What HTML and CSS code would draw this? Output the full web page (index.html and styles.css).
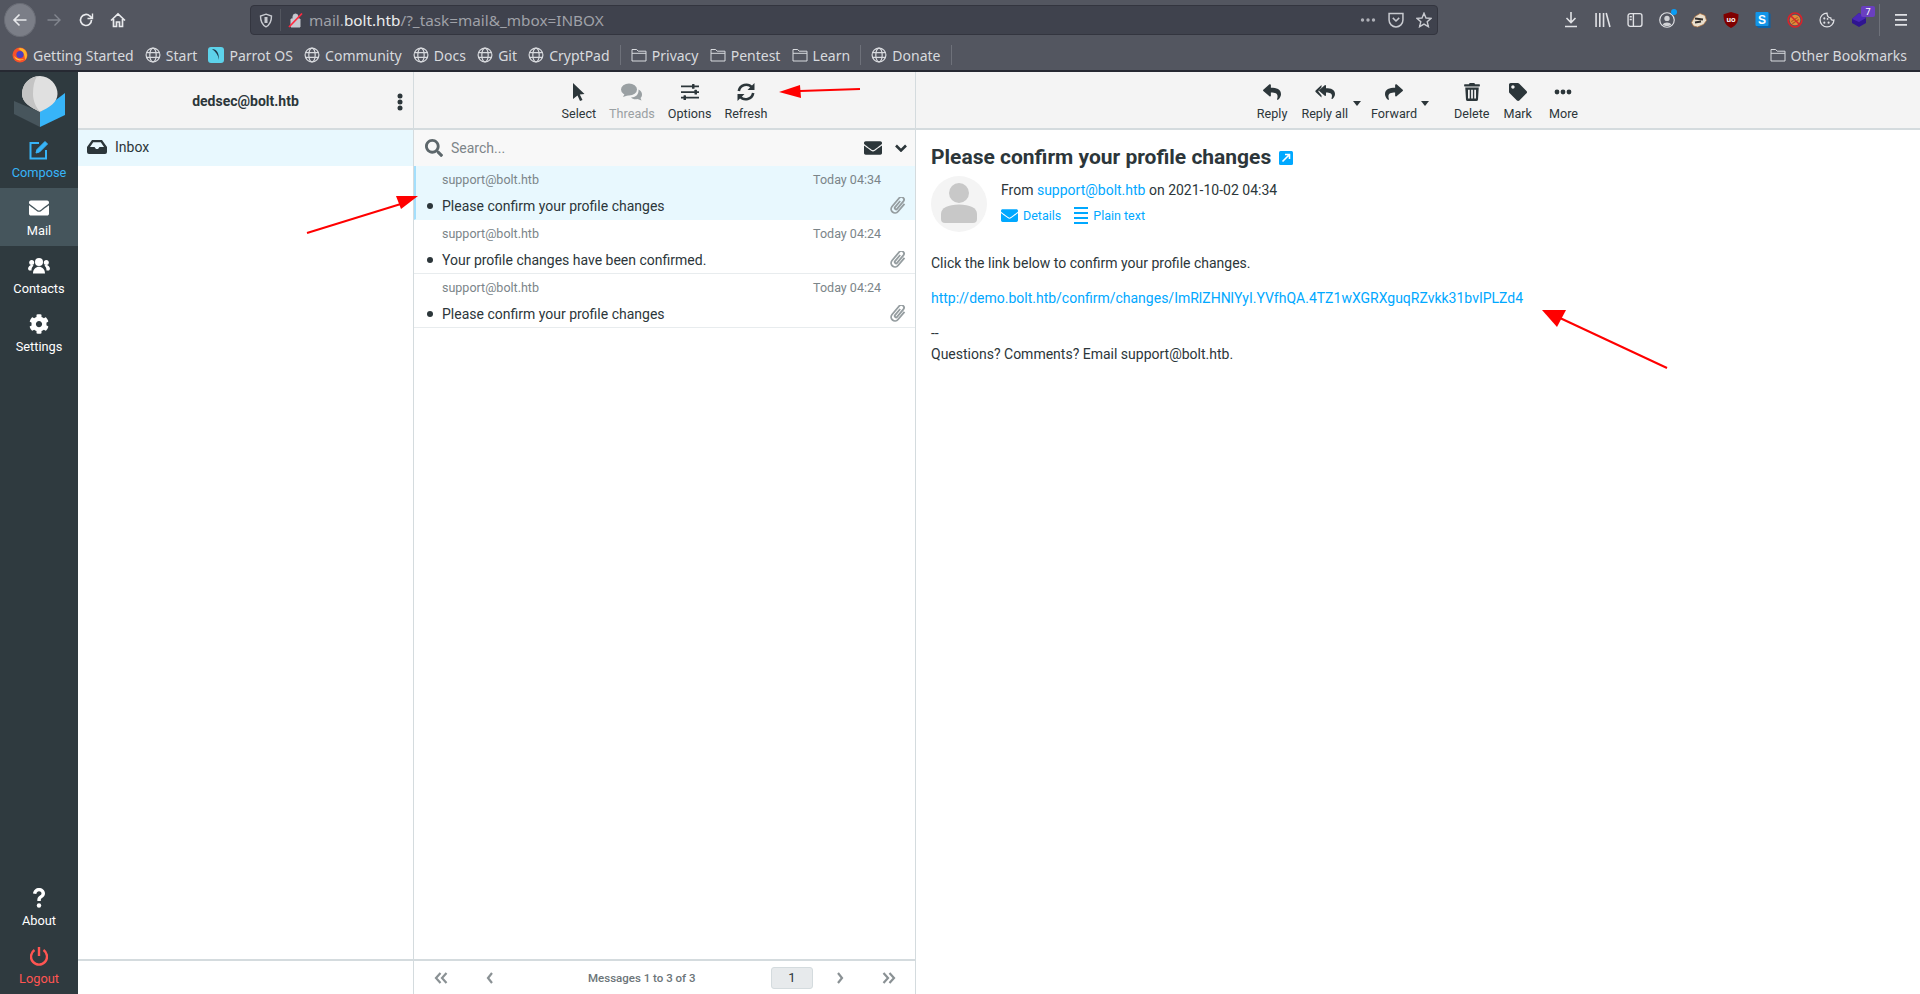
FILE: index.html
```html
<!DOCTYPE html>
<html lang="en">
<head>
    <meta charset="UTF-8">
    <title>Roundcube Webmail :: Please confirm your profile changes</title>
    <link rel="stylesheet" href="styles.css">
</head>
<body>
    <svg class="defs" width="0" height="0">
        <symbol id="i-envelope" viewBox="0 0 512 512"><path d="M502.3 190.8c3.9-3.1 9.7-.2 9.7 4.7V400c0 26.5-21.5 48-48 48H48c-26.5 0-48-21.5-48-48V195.6c0-5 5.7-7.8 9.7-4.7 22.4 17.4 52.1 39.5 154.1 113.6 21.1 15.4 56.7 47.8 92.2 47.6 35.7.3 72-32.8 92.3-47.6 102-74.1 131.6-96.3 154-113.7zM256 320c23.2.4 56.6-29.2 73.4-41.4 132.7-96.3 142.8-104.7 173.4-128.7 5.8-4.5 9.2-11.5 9.2-18.9v-19c0-26.5-21.5-48-48-48H48C21.5 64 0 85.5 0 112v19c0 7.4 3.4 14.3 9.2 18.9 30.6 23.9 40.7 32.4 173.4 128.7 16.8 12.2 50.2 41.8 73.4 41.4z"/></symbol>
        <symbol id="i-search" viewBox="0 0 512 512"><path d="M505 442.7L405.3 343c-4.5-4.5-10.6-7-17-7H372c27.6-35.3 44-79.7 44-128C416 93.1 322.9 0 208 0S0 93.1 0 208s93.1 208 208 208c48.3 0 92.7-16.4 128-44v16.3c0 6.4 2.5 12.5 7 17l99.7 99.7c9.4 9.4 24.6 9.4 33.9 0l28.3-28.3c9.4-9.4 9.4-24.6.1-34zM208 336c-70.7 0-128-57.2-128-128 0-70.7 57.2-128 128-128 70.7 0 128 57.2 128 128 0 70.7-57.2 128-128 128z"/></symbol>
        <symbol id="i-reply" viewBox="0 0 512 512"><path d="M8.309 189.836L184.313 37.851C199.719 24.546 224 35.347 224 56.015v80.053c160.629 1.839 288 34.032 288 186.258 0 61.441-39.581 122.309-83.333 154.132-13.653 9.931-33.111-2.533-28.077-18.631 45.344-145.012-21.507-183.51-176.59-185.742V360c0 20.7-24.3 31.453-39.687 18.164l-176.004-152c-11.071-9.562-11.086-26.753 0-36.328z"/></symbol>
        <symbol id="i-trash" viewBox="0 0 448 512"><path d="M432 32H312l-9.4-18.7A24 24 0 0 0 281.1 0H166.8a23.72 23.72 0 0 0-21.4 13.3L136 32H16A16 16 0 0 0 0 48v32a16 16 0 0 0 16 16h416a16 16 0 0 0 16-16V48a16 16 0 0 0-16-16zM53.2 467a48 48 0 0 0 47.9 45h245.8a48 48 0 0 0 47.9-45L416 128H32zM110 190h50v250h-50zM199 190h50v250h-50zM288 190h50v250h-50z" fill-rule="evenodd"/></symbol>
        <symbol id="i-tag" viewBox="0 0 512 512"><path d="M0 252.118V48C0 21.49 21.49 0 48 0h204.118a48 48 0 0 1 33.941 14.059l211.882 211.882c18.745 18.745 18.745 49.137 0 67.882L293.823 497.941c-18.745 18.745-49.137 18.745-67.882 0L14.059 286.059A48 48 0 0 1 0 252.118zM112 64c-26.51 0-48 21.49-48 48s21.49 48 48 48 48-21.49 48-48-21.49-48-48-48z"/></symbol>
        <symbol id="i-cog" viewBox="0 0 512 512"><path d="M487.4 315.7l-42.6-24.6c4.3-23.2 4.3-47 0-70.2l42.6-24.6c4.9-2.8 7.1-8.6 5.5-14-11.1-35.6-30-67.8-54.7-94.6-3.8-4.1-10-5.1-14.8-2.3L380.8 110c-17.9-15.4-38.5-27.3-60.8-35.1V25.8c0-5.6-3.9-10.5-9.4-11.7-36.7-8.2-74.3-7.8-109.2 0-5.5 1.2-9.4 6.1-9.4 11.7V75c-22.2 7.9-42.8 19.8-60.8 35.1L88.7 85.5c-4.9-2.8-11-1.9-14.8 2.3-24.7 26.7-43.6 58.9-54.7 94.6-1.7 5.4.6 11.2 5.5 14L67.3 221c-4.3 23.2-4.3 47 0 70.2l-42.6 24.6c-4.9 2.8-7.1 8.6-5.5 14 11.1 35.6 30 67.8 54.7 94.6 3.8 4.1 10 5.1 14.8 2.3l42.6-24.6c17.9 15.4 38.5 27.3 60.8 35.1v49.2c0 5.6 3.9 10.5 9.4 11.7 36.7 8.2 74.3 7.8 109.2 0 5.5-1.2 9.4-6.1 9.4-11.7v-49.2c22.2-7.9 42.8-19.8 60.8-35.1l42.6 24.6c4.9 2.8 11 1.9 14.8-2.3 24.7-26.7 43.6-58.9 54.7-94.6 1.5-5.5-.7-11.3-5.6-14.1zM256 336c-44.1 0-80-35.9-80-80s35.9-80 80-80 80 35.9 80 80-35.9 80-80 80z"/></symbol>
        <symbol id="i-clip" viewBox="1.500 1.500 13 14"><path d="M11.200 4.500v8.300a3.200 3.200 0 0 1-6.400 0V3.600a2.200 2.200 0 0 1 4.400 0v8a1.100 1.100 0 0 1-2.200 0V5" transform="rotate(40 8 8.500) translate(0 -.5)" fill="none" stroke="currentColor" stroke-width="1.500"/></symbol>
        <symbol id="i-globe" viewBox="0 0 16 16"><g fill="none" stroke="currentColor" stroke-width="1.200"><circle cx="8" cy="8" r="6.900"/><ellipse cx="8" cy="8" rx="3.200" ry="6.900"/><path d="M1.400 5.700h13.200M1.400 10.300h13.200"/></g></symbol>
        <symbol id="i-folder" viewBox="0 0 16 16"><path d="M1 14V2.500h4.700l1.500 1.700H15V14zM1 6.300h14" fill="none" stroke="currentColor"/></symbol>
    </svg>

    <header class="browser">
        <div class="nav-bar">
            <div class="nav-buttons">
                <span class="back-btn">
                    <svg width="16" height="16" viewBox="0 0 16 16" fill="none" stroke="#e8e9ec" stroke-width="1.600"><path d="M14.500 8H2M7.500 2.500 2 8l5.500 5.500"/></svg>
                </span>
                <svg class="nav-fwd" width="16" height="16" viewBox="0 0 16 16" fill="none" stroke="#83868f" stroke-width="1.400"><path d="M1.500 8H14M8.500 2.500 14 8l-5.500 5.500"/></svg>
                <svg class="nav-icon" width="16" height="16" viewBox="0 0 16 16" fill="none" stroke="#e8e9ec" stroke-width="1.700"><path d="M13.500 8a5.500 5.500 0 1 1-1.700-4L14 6"/><path d="M14.500 1.500v5h-5" stroke-width="1.400"/></svg>
                <svg class="nav-icon" width="16" height="16" viewBox="0 0 16 16" fill="none" stroke="#e8e9ec" stroke-width="1.700"><path d="M1 8.500 8 2l7 6.500M3.500 7v7.500h3V10h3v4.500h3V7"/></svg>
            </div>
            <div class="url-bar">
                <svg class="url-shield" width="14" height="15" viewBox="0 0 14 15" fill="none" stroke="#c8cad0" stroke-width="1.400"><path d="M7 1.200 12.500 3c0 5-1 8.500-5.500 10.800C2.500 11.500 1.500 8 1.500 3z"/><path d="M7 4v6" stroke-width="3"/></svg>
                <span class="url-sep"></span>
                <svg class="url-lock" width="16" height="16" viewBox="0 0 16 16"><path d="M3 7h9v8H3zM5 7V4.500a2.500 2.500 0 0 1 5 0V7" fill="#c6c8cf" stroke="#c6c8cf"/><path d="M1 15 14 1.500" stroke="#ff2a40" stroke-width="1.800"/></svg>
                <span class="url-text">mail.<b>bolt.htb</b>/?_task=mail&amp;_mbox=INBOX</span>
                <span class="url-actions">
                    <svg width="16" height="4" viewBox="0 0 16 4" fill="#aeb0b7"><circle cx="2.500" cy="2" r="1.700"/><circle cx="8" cy="2" r="1.700"/><circle cx="13.500" cy="2" r="1.700"/></svg>
                    <svg width="16" height="16" viewBox="0 0 15 15" fill="none" stroke="#c8cad0" stroke-width="1.400"><path d="M1 1.500h13v6a6.500 6.500 0 0 1-13 0z"/><path d="M4.500 5.500 7.500 8.500l3-3"/></svg>
                    <svg width="16" height="16" viewBox="0 0 16 16" fill="none" stroke="#c8cad0" stroke-width="1.400"><path d="M8 1.200 10 6l5 .4-3.800 3.300 1.200 5L8 12.100l-4.400 2.600 1.200-5L1 6.400 6 6z"/></svg>
                </span>
            </div>
            <div class="tool-icons">
                <svg viewBox="0 0 14 16" fill="none" stroke="#e0e1e5" stroke-width="1.600"><path d="M7 0v10M2.500 6 7 10.500 11.500 6M1 14.500h12"/></svg>
                <svg viewBox="0 0 15 15" fill="none" stroke="#e0e1e5" stroke-width="1.500"><path d="M1 1v13M4.500 1v13M8 1v13M10.500 1l3.500 13"/></svg>
                <svg viewBox="0 0 15 14" fill="none" stroke="#e0e1e5" stroke-width="1.300"><rect x="1" y="1" width="13" height="12" rx="2"/><path d="M6 1v12M2.500 4H4.500M2.500 6.500H4.500"/></svg>
                <span class="account-icon">
                    <svg viewBox="0 0 15 15" fill="none" stroke="#e0e1e5" stroke-width="1.100"><circle cx="7.500" cy="7.500" r="6.800"/><circle cx="7.500" cy="6" r="2.500" fill="#d0d1d5" stroke="none"/><path d="M3.500 12c1-3 7-3 8 0-2 1.500-6 1.500-8 0z" fill="#d0d1d5" stroke="none"/></svg>
                    <i class="account-dot"></i>
                </span>
                <svg viewBox="0 0 16 15"><path d="M.5 10 4 4l5-3 5 2 1.500 5-3 4-6 2.500-4-1z" fill="#eadfce" stroke="#b2713a" stroke-width=".7"/><path d="M4 6l8 1M4 10l6-1" stroke="#33302e" stroke-width="2"/></svg>
                <svg viewBox="0 0 14 15"><path d="M7 0 14 2c0 6-1 10-7 13C1 12 0 8 0 2z" fill="#800000"/><text x="7" y="9.500" class="ublock-text">uo</text></svg>
                <svg viewBox="0 0 15 16"><path d="M13 0l2 2v14H3l-2-2h12z" fill="#0b62a8"/><rect width="13" height="14" rx="1" fill="#1295e8"/><text x="6.500" y="11.500" class="s-text">S</text></svg>
                <svg viewBox="0 0 15 15"><circle cx="7.500" cy="7.500" r="5" fill="#e08b3c"/><path d="M4 9l6-4M5 11l6-4" stroke="#a85a1e"/><circle cx="7.500" cy="7.500" r="6.500" fill="none" stroke="#d8232a" stroke-width="1.500"/><path d="M3 3l9 9" stroke="#d8232a" stroke-width="1.500"/></svg>
                <svg viewBox="0 0 15 15"><path d="M7.500 1a6.500 6.500 0 1 0 6.500 6.500c-2 .5-3-.5-3-2C9 5.500 7.500 4 7.500 1z" fill="none" stroke="#dfe0e4" stroke-width="1.200"/><circle cx="5" cy="6" r="1" fill="#dfe0e4"/><circle cx="5" cy="10" r="1" fill="#dfe0e4"/><circle cx="9" cy="10" r="1" fill="#dfe0e4"/><circle cx="8" cy="6.500" r=".8" fill="#dfe0e4"/></svg>
                <span class="ext-purple">
                    <svg viewBox="0 0 16 16"><path d="M8 1l7 5v5l-7 4-7-4V7z" fill="#2f1590"/><path d="M8 1l7 5-7 4-7-3z" fill="#4a27b8"/></svg>
                    <i class="ext-badge">7</i>
                </span>
                <span class="tool-sep"></span>
                <svg class="menu-icon" viewBox="0 0 14 12" fill="#e0e1e5"><path d="M1 0h12v1.800H1zM1 5h12v1.800H1zM1 10h12v1.800H1z"/></svg>
            </div>
        </div>
        <div class="bookmarks">
            <a class="bookmark">
                <svg width="16" height="16" viewBox="0 0 16 16"><circle cx="8" cy="8" r="7.500" fill="#f7512a"/><path d="M8 1a7 7 0 0 1 7 7c0 2-1 4-2 5 0-5-2-9-7-11z" fill="#ffb52a"/><circle cx="8" cy="7.500" r="3.600" fill="#4a3fc0"/><path d="M2 9c1 4 6 6 10 3-4 1-7 0-10-3z" fill="#ffcf3a"/></svg>
                Getting Started
            </a>
            <a class="bookmark"><svg class="bm-svg"><use href="#i-globe"/></svg>Start</a>
            <a class="bookmark">
                <svg width="16" height="16" viewBox="0 0 16 16"><rect width="16" height="16" rx="3" fill="#5dd2ea"/><path d="M4 2c5 0 7 4 7 11-1-5-3-8-7-11z" fill="#1f3b4d"/></svg>
                Parrot OS
            </a>
            <a class="bookmark"><svg class="bm-svg"><use href="#i-globe"/></svg>Community</a>
            <a class="bookmark"><svg class="bm-svg"><use href="#i-globe"/></svg>Docs</a>
            <a class="bookmark"><svg class="bm-svg"><use href="#i-globe"/></svg>Git</a>
            <a class="bookmark"><svg class="bm-svg"><use href="#i-globe"/></svg>CryptPad</a>
            <span class="bm-sep"></span>
            <a class="bookmark"><svg class="bm-svg"><use href="#i-folder"/></svg>Privacy</a>
            <a class="bookmark"><svg class="bm-svg"><use href="#i-folder"/></svg>Pentest</a>
            <a class="bookmark"><svg class="bm-svg"><use href="#i-folder"/></svg>Learn</a>
            <span class="bm-sep"></span>
            <a class="bookmark"><svg class="bm-svg"><use href="#i-globe"/></svg>Donate</a>
            <span class="bm-sep"></span>
            <a class="bookmark other-bm"><svg class="bm-svg"><use href="#i-folder"/></svg>Other Bookmarks</a>
        </div>
    </header>

    <main class="app">
        <nav class="sidebar">
            <div class="logo">
                <svg width="52" height="52" viewBox="0 0 52 52">
                    <path d="M1 25 27 36v15L1 38z" fill="#47555c"/>
                    <path d="M27 36 52 17v22L27 51z" fill="#37b4f8"/>
                    <path d="M27 0a18 18 0 0 1 17.500 18c0 8-7.500 13-17.500 18C17 31 9 26 9 18A18 18 0 0 1 27 0z" fill="#e0e0e0"/>
                    <path d="M24 .3C15 2 9 9 9 18c0 8 8 13 18 18-4-5-7-11-7-18 0-7 1-13 4-17.700z" fill="#c4c4c4"/>
                </svg>
            </div>
            <a class="side-item compose">
                <svg width="20" height="20" viewBox="0 0 20 20" fill="none" stroke="currentColor"><path d="M10 3H1.500v15.500H17V10" stroke-width="2"/><path d="M7 13 8 9.500 16 1.500l2.500 2.500-8 8z" fill="currentColor" stroke-width="1"/></svg>
                <span>Compose</span>
            </a>
            <a class="side-item active">
                <svg class="side-svg"><use href="#i-envelope"/></svg>
                <span>Mail</span>
            </a>
            <a class="side-item">
                <svg width="22" height="18" viewBox="0 0 22 18" fill="currentColor"><circle cx="11" cy="5" r="4"/><circle cx="3.700" cy="5.500" r="2.500"/><circle cx="18.300" cy="5.500" r="2.500"/><path d="M5 16.500c0-9 12-9 12 0zM0 12c0-3 3-5 5.500-3.500C4 10 3.500 11.500 3.500 13.500H1zM22 12c0-3-3-5-5.500-3.500 1.500 1.500 2 3 2 5H21z"/></svg>
                <span>Contacts</span>
            </a>
            <a class="side-item">
                <svg class="side-svg"><use href="#i-cog"/></svg>
                <span>Settings</span>
            </a>
            <div class="side-spacer"></div>
            <a class="side-item">
                <svg width="12" height="20" viewBox="0 0 12 20" fill="currentColor"><path d="M0 5.500C.5 2 3 0 6 0s6 2 6 5.500c0 2.500-1.500 3.500-3 4.500-1 .7-1.200 1.200-1.200 3H4.300c0-3 .5-4 2.300-5.200C7.700 7 8.500 6.500 8.500 5.500 8.500 4 7.300 3.200 6 3.200S3.700 4 3.300 6z"/><circle cx="6" cy="17.500" r="2.200"/></svg>
                <span>About</span>
            </a>
            <a class="side-item logout">
                <svg width="18" height="20" viewBox="0 0 18 20" fill="none" stroke="currentColor" stroke-width="2.400"><path d="M9 1v9"/><path d="M13.500 4A8 8 0 1 1 4.500 4"/></svg>
                <span>Logout</span>
            </a>
        </nav>

        <section class="folders">
            <div class="folders-head">
                <span class="user">dedsec@bolt.htb</span>
                <svg class="kebab" width="6" height="18" viewBox="0 0 6 18" fill="#2c363a"><circle cx="3" cy="3" r="2.500"/><circle cx="3" cy="9" r="2.500"/><circle cx="3" cy="15" r="2.500"/></svg>
            </div>
            <div class="folder-row">
                <svg width="20" height="14" viewBox="0 0 20 14" fill="#2c363a"><path d="M5 0h10l5 7v5a2 2 0 0 1-2 2H2a2 2 0 0 1-2-2V7zm1.200 2.200L3 7h4.500L9 9h2l1.500-2H17l-3.200-4.800z" fill-rule="evenodd"/></svg>
                <span>Inbox</span>
            </div>
            <div class="grow"></div>
            <div class="pane-foot"></div>
        </section>

        <section class="messages">
            <div class="toolbar list-tools">
                <a class="tool">
                    <svg width="13" height="18" viewBox="0 0 13 18" fill="currentColor"><path d="M1 0 12.500 11 7.800 11.500 10.500 17l-2.500 1-2.500-5.600L1 16z"/></svg>
                    <span>Select</span>
                </a>
                <a class="tool disabled">
                    <svg width="21" height="18" viewBox="0 0 21 18" fill="currentColor"><ellipse cx="8" cy="6.500" rx="8" ry="6"/><path d="M2 14 4 10l4 2z"/><path d="M17.500 6.500c2.500 1 3.500 3 3.500 5 0 1.500-.5 2.500-1.500 3.500l1 2.500-4-1.500c-2.500.7-5 0-6.500-1.500 4.500 0 8-3 7.500-8z"/></svg>
                    <span>Threads</span>
                </a>
                <a class="tool">
                    <svg width="18" height="16" viewBox="0 0 18 16" fill="currentColor"><path d="M0 1.500h18v1.800H0zM0 7.200h18V9H0zM0 12.800h18v1.800H0z"/><rect x="11" y="0" width="2.500" height="4.800" rx=".6"/><rect x="13.500" y="5.700" width="2.500" height="4.800" rx=".6"/><rect x="2.500" y="11.300" width="2.500" height="4.700" rx=".6"/></svg>
                    <span>Options</span>
                </a>
                <a class="tool">
                    <svg width="18" height="18" viewBox="0 0 18 18" fill="none" stroke="currentColor" stroke-width="2.600"><path d="M1.800 8A7.500 7.500 0 0 1 15 4.500"/><path d="M16.200 10A7.500 7.500 0 0 1 3 13.500"/><path d="M17.500 0v7h-7z" fill="currentColor" stroke="none"/><path d="M.5 18v-7h7z" fill="currentColor" stroke="none"/></svg>
                    <span>Refresh</span>
                </a>
            </div>
            <div class="search-row">
                <svg class="search-svg"><use href="#i-search"/></svg>
                <span class="search-text">Search...</span>
                <svg class="filter-svg"><use href="#i-envelope"/></svg>
                <svg class="chevron" width="12" height="8" viewBox="0 0 12 8" fill="none" stroke="#2c363a" stroke-width="2.600"><path d="M1 1.500 6 6.500l5-5"/></svg>
            </div>
            <ul class="msg-list">
                <li class="msg selected">
                    <div class="msg-top"><span>support@bolt.htb</span><span class="msg-date">Today 04:34</span></div>
                    <div class="msg-sub"><i class="dot"></i><span class="subject">Please confirm your profile changes</span><svg class="clip"><use href="#i-clip"/></svg></div>
                </li>
                <li class="msg">
                    <div class="msg-top"><span>support@bolt.htb</span><span class="msg-date">Today 04:24</span></div>
                    <div class="msg-sub"><i class="dot"></i><span class="subject">Your profile changes have been confirmed.</span><svg class="clip"><use href="#i-clip"/></svg></div>
                </li>
                <li class="msg">
                    <div class="msg-top"><span>support@bolt.htb</span><span class="msg-date">Today 04:24</span></div>
                    <div class="msg-sub"><i class="dot"></i><span class="subject">Please confirm your profile changes</span><svg class="clip"><use href="#i-clip"/></svg></div>
                </li>
            </ul>
            <div class="grow"></div>
            <div class="pane-foot pager">
                <svg width="14" height="12" viewBox="0 0 14 12" fill="none" stroke="#8a9194" stroke-width="2.200"><path d="M6.500 1 2 6l4.500 5M12.500 1 8 6l4.500 5"/></svg>
                <svg class="pg-prev" width="8" height="12" viewBox="0 0 8 12" fill="none" stroke="#8a9194" stroke-width="2.200"><path d="M6 1 2 6l4 5"/></svg>
                <span class="pg-count">Messages 1 to 3 of 3</span>
                <span class="pg-num">1</span>
                <svg class="pg-next" width="8" height="12" viewBox="0 0 8 12" fill="none" stroke="#8a9194" stroke-width="2.200"><path d="M2 1l4 5-4 5"/></svg>
                <svg class="pg-last" width="14" height="12" viewBox="0 0 14 12" fill="none" stroke="#8a9194" stroke-width="2.200"><path d="M1.500 1 6 6l-4.500 5M7.500 1 12 6l-4.500 5"/></svg>
            </div>
        </section>

        <section class="reader">
            <div class="toolbar read-tools">
                <a class="tool">
                    <svg class="tool-svg"><use href="#i-reply"/></svg>
                    <span>Reply</span>
                </a>
                <a class="tool t-replyall">
                    <svg width="20" height="18" viewBox="0 0 20 18" fill="currentColor"><use href="#i-reply" x="4" width="16" height="18"/><path d="M6.500 2 .6 7.600c-.4.400-.4 1 0 1.400l5.900 5.600V12.400L3.200 8.300 6.500 4.200z"/></svg>
                    <span>Reply all</span>
                </a>
                <i class="drop drop-a"></i>
                <a class="tool t-forward">
                    <svg class="tool-svg flip"><use href="#i-reply"/></svg>
                    <span>Forward</span>
                </a>
                <i class="drop drop-b"></i>
                <a class="tool t-delete">
                    <svg class="tool-svg"><use href="#i-trash"/></svg>
                    <span>Delete</span>
                </a>
                <a class="tool t-mark">
                    <svg class="tool-svg"><use href="#i-tag"/></svg>
                    <span>Mark</span>
                </a>
                <a class="tool t-more">
                    <svg width="18" height="18" viewBox="0 0 18 18" fill="currentColor"><circle cx="3" cy="9" r="2.400"/><circle cx="9" cy="9" r="2.400"/><circle cx="15" cy="9" r="2.400"/></svg>
                    <span>More</span>
                </a>
            </div>
            <article class="mail">
                <h1 class="mail-title">
                    Please confirm your profile changes
                    <svg class="ext-link" width="14" height="14" viewBox="0 0 14 14"><rect width="14" height="14" rx="1.500" fill="#00a8ff"/><path d="M3.500 10.500 10 4M6 3.500h4.500V8" fill="none" stroke="#fff" stroke-width="1.600"/></svg>
                </h1>
                <div class="mail-head">
                    <div class="avatar">
                        <svg width="36" height="40" viewBox="0 0 36 40" fill="#c8c8c8"><circle cx="18" cy="10" r="10"/><path d="M0 36V31C0 25 7 21.500 18 21.500S36 25 36 31v5a4 4 0 0 1-4 4H4a4 4 0 0 1-4-4z"/></svg>
                    </div>
                    <div class="head-info">
                        <div class="from">From <a class="link">support@bolt.htb</a> on 2021-10-02 04:34</div>
                        <div class="head-links">
                            <a class="link small"><svg class="small-svg"><use href="#i-envelope"/></svg>Details</a>
                            <a class="link small"><svg width="14" height="18" viewBox="0 0 14 18" fill="#00a8ff"><path d="M0 1h14v2H0zM0 6h14v2H0zM0 11h14v2H0zM0 16h14v2H0z"/></svg>Plain text</a>
                        </div>
                    </div>
                </div>
                <div class="mail-body">
                    <p>Click the link below to confirm your profile changes.</p>
                    <p><a class="link">http://demo.bolt.htb/confirm/changes/ImRlZHNlYyI.YVfhQA.4TZ1wXGRXguqRZvkk31bvIPLZd4</a></p>
                    <p>--<br>Questions? Comments? Email support@bolt.htb.</p>
                </div>
            </article>
        </section>
    </main>

    <!-- red annotation arrows, drawn over the screenshot -->
    <svg class="arrows" width="1920" height="994" viewBox="0 0 1920 994">
        <g stroke="#f00" stroke-width="2" fill="#f00">
            <path d="M307 233 404 203" />
            <path d="M418 196 396 196 401 209z" stroke="none"/>
            <path d="M860 89 800 91"/>
            <path d="M779 92 800 85 801 98z" stroke="none"/>
            <path d="M1667 368 1560 318"/>
            <path d="M1542 310 1566 310 1557 327z" stroke="none"/>
        </g>
    </svg>
</body>
</html>
```

FILE: styles.css
```css
* { box-sizing: border-box; }
html, body { margin: 0; padding: 0; height: 100%; overflow: hidden; }
body { display: flex; flex-direction: column; font-family: "Roboto", sans-serif; font-size: 14px; color: #2c363a; background: #fff; }
a { text-decoration: none; color: inherit; }
.defs { position: absolute; }
.grow { flex: 1; }

/* browser chrome */
.browser { height: 72px; flex-shrink: 0; background: #535660; border-bottom: 2px solid #262932; color: #d8dade; font-family: "Noto Sans", sans-serif; }
.nav-bar { height: 40px; display: flex; align-items: center; padding-left: 4px; }
.nav-buttons { display: flex; align-items: center; width: 246px; }
.back-btn { flex: 0 0 32px; height: 34px; border-radius: 50%; background: #7b7e87; border: 1px solid #6a6d76; display: flex; align-items: center; justify-content: center; }
.nav-fwd { margin-left: 10px; }
.nav-icon { margin-left: 16px; }
.url-bar { width: 1188px; height: 30px; background: #3f424d; border: 1px solid #33353f; border-radius: 4px; display: flex; align-items: center; padding-left: 8px; }
.url-sep { width: 1px; height: 22px; margin: 0 7px; background: #53565f; }
.url-lock { margin-right: 5px; }
.url-text { font-size: 15.300px; color: #9fa1a8; }
.url-text b { font-weight: 400; color: #eceded; }
.url-actions { margin-left: auto; display: flex; align-items: center; gap: 12px; padding-right: 5px; }
.tool-icons { flex: 1; display: flex; align-items: center; justify-content: flex-end; gap: 16px; padding-right: 12px; }
.tool-icons svg { width: 16px; height: 16px; }
.account-icon, .ext-purple { position: relative; display: flex; }
.account-dot { position: absolute; top: -3px; right: -2px; width: 6px; height: 6px; border-radius: 50%; background: #0a9df5; }
.ublock-text { fill: #fff; font-size: 7px; font-weight: 700; text-anchor: middle; font-family: "Liberation Sans", sans-serif; }
.s-text { fill: #fff; font-size: 12px; font-weight: 700; text-anchor: middle; font-family: "Liberation Sans", sans-serif; }
.ext-badge { position: absolute; top: -6px; right: -8px; width: 14px; height: 11px; font-size: 9px; line-height: 11px; text-align: center; font-style: normal; background: #6a3fc0; color: #fff; border-radius: 2px; }
.tool-sep { width: 1px; height: 32px; margin: 0 -2px 0 -4px; background: #6e717a; }
.tool-icons .menu-icon { width: 14px; height: 12px; }
.bookmarks { height: 30px; display: flex; align-items: center; padding: 0 13px 0 12px; font-size: 14px; }
.bookmark { display: flex; align-items: center; gap: 5px; margin-right: 11.200px; white-space: nowrap; }
.bm-svg { width: 16px; height: 16px; color: #d8dade; }
.bm-sep { width: 1px; height: 20px; background: #6e717a; margin: 0 10px 0 -1px; }
.other-bm { margin-left: auto; margin-right: 0; }

/* webmail layout */
.app { flex: 1; display: flex; min-height: 0; }
.sidebar { width: 78px; flex-shrink: 0; background: #2f3a3f; display: flex; flex-direction: column; color: #fff; font-size: 12.800px; }
.logo { height: 58px; display: flex; justify-content: center; padding-top: 4px; }
.side-item { height: 58px; flex-shrink: 0; display: flex; flex-direction: column; align-items: center; padding-top: 10px; gap: 5px; line-height: 15px; }
.side-item svg { height: 20px; }
.side-svg { width: 20px; height: 20px; fill: currentColor; }
.side-item.active { background: #45555c; }
.side-item.compose { color: #37b4f8; }
.side-item.logout { color: #ff5552; }
.side-spacer { flex: 1; }

.folders { width: 336px; flex-shrink: 0; border-right: 1px solid #d4dbde; display: flex; flex-direction: column; }
.folders-head { height: 58px; flex-shrink: 0; background: #f4f4f4; border-bottom: 2px solid #d4dbde; display: flex; align-items: center; position: relative; justify-content: center; padding-top: 2px; }
.user { font-weight: 700; font-size: 14px; }
.kebab { position: absolute; right: 10px; top: 21px; }
.folder-row { height: 36px; flex-shrink: 0; background: #e8f8fe; display: flex; align-items: center; gap: 8px; padding: 0 0 2px 9px; }
.pane-foot { height: 35px; flex-shrink: 0; border-top: 2px solid #d4dbde; }

.messages { width: 502px; flex-shrink: 0; border-right: 1px solid #d4dbde; display: flex; flex-direction: column; }
.toolbar { height: 58px; flex-shrink: 0; background: #f4f4f4; border-bottom: 2px solid #d4dbde; display: flex; align-items: flex-start; padding-top: 11px; font-size: 12.600px; }
.tool { display: flex; flex-direction: column; align-items: center; gap: 5px; line-height: 15px; }
.tool svg { height: 18px; }
.tool.disabled { color: #9aa0a3; }
.tool-svg { width: 18px; height: 18px; fill: currentColor; }
.flip { transform: scaleX(-1); }
.list-tools { justify-content: center; gap: 13px; }

.search-row { height: 36px; flex-shrink: 0; background: #f8f8f8; display: flex; align-items: center; padding: 0 8px 0 11px; }
.search-svg { width: 18px; height: 18px; fill: #5d676b; margin-right: 8px; }
.search-text { flex: 1; color: #7d8589; }
.filter-svg { width: 18px; height: 18px; fill: #2c363a; margin-right: 13px; }
.msg-list { list-style: none; margin: 0; padding: 0; }
.msg { height: 54px; border-bottom: 1px solid #e8ecee; padding: 0 9px 0 13px; }
.msg.selected { background: #e8f8fe; border-left: 2px solid #a4dffc; padding-left: 11px; border-bottom-color: #e8f8fe; }
.msg-top { height: 26px; display: flex; align-items: center; justify-content: space-between; padding: 0 25px 0 15px; font-size: 12.500px; color: #7b8589; }
.msg-sub { height: 27px; display: flex; align-items: center; }
.dot { width: 6px; height: 6px; border-radius: 50%; background: #2c363a; margin-right: 9px; }
.subject { flex: 1; }
.clip { width: 16px; height: 17px; color: #959da0; }

.pager { display: flex; align-items: center; padding: 0 0 0 20px; font-size: 11.500px; color: #6c7579; font-weight: 500; }
.pg-prev { margin-left: 38px; }
.pg-count { margin-left: 94px; width: 183px; }
.pg-num { width: 42px; height: 22px; background: #e7eaec; border: 1px solid #d4dbde; border-radius: 3px; color: #2c363a; font-size: 13px; font-weight: 400; text-align: center; line-height: 20px; }
.pg-next { margin-left: 23px; }
.pg-last { margin-left: 38px; }

.reader { flex: 1; min-width: 0; display: flex; flex-direction: column; }
.read-tools { justify-content: flex-end; padding-right: 342px; }
.drop { width: 0; height: 0; margin-top: 18px; border: 4px solid transparent; border-top: 5px solid #2c363a; border-bottom: 0; }
.t-replyall { margin-left: 14px; }
.drop-a { margin-left: 5px; }
.t-forward { margin-left: 10px; }
.drop-b { margin-left: 4px; }
.t-delete { margin-left: 25px; }
.t-mark { margin-left: 14px; }
.t-more { margin-left: 17px; }
.mail { padding: 14px 15px; }
.mail-title { margin: 0; font-size: 21px; font-weight: 700; line-height: 26px; }
.ext-link { margin-left: 3px; vertical-align: -1px; }
.mail-head { display: flex; gap: 14px; margin-top: 6px; }
.avatar { width: 56px; height: 56px; flex-shrink: 0; border-radius: 50%; background: #f4f4f4; display: flex; align-items: flex-end; justify-content: center; padding-bottom: 9px; overflow: hidden; }
.from { margin-top: 5px; line-height: 18px; }
.link { color: #00a8ff; }
.head-links { display: flex; gap: 13px; margin-top: 7px; }
.small { font-size: 12.500px; display: flex; align-items: center; gap: 5px; }
.small-svg { width: 17px; height: 17px; fill: #00a8ff; }
.mail-body { margin-top: 21px; line-height: 21px; }
.mail-body p { margin: 0 0 14px; }

.arrows { position: absolute; top: 0; left: 0; pointer-events: none; }
```
